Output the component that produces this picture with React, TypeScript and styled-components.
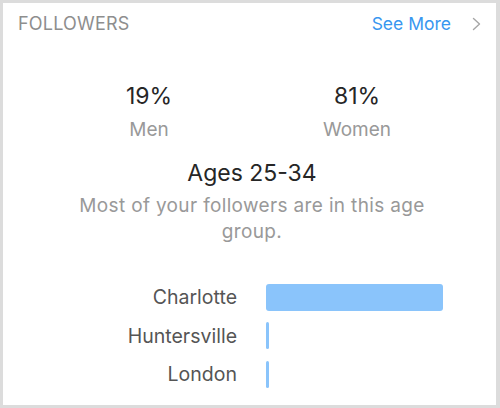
import React from "react";
import styled, { createGlobalStyle } from "styled-components";

const Global = createGlobalStyle`
  html, body { margin: 0; padding: 0; background: #dcdcdc; }
  body { font-family: Inter, "Liberation Sans", Arial, sans-serif; -webkit-font-smoothing: antialiased; }
`;

const Frame = styled.div`
  width: 500px;
  height: 408px;
  box-sizing: border-box;
  padding: 3px 4px 3px 3px;
  background: #dcdcdc;
`;

const Card = styled.div`
  height: 100%;
  background: #fff;
  display: flex;
  flex-direction: column;
`;

const Header = styled.div`
  height: 41px;
  display: flex;
  align-items: center;
  justify-content: space-between;
  padding: 0 15px;
`;

const Title = styled.div`
  font-size: 18px;
  color: #8e8e8e;
  letter-spacing: 0.2px;
`;

const SeeMore = styled.div`
  display: flex;
  align-items: center;
  gap: 21px;
  font-size: 17.5px;
  color: #3897f0;
`;

const Gender = styled.div`
  margin-top: 38px;
  display: grid;
  grid-template-columns: 208px 208px;
  justify-content: center;
  padding-left: 7px;
`;

const GenderCol = styled.div`
  display: flex;
  flex-direction: column;
  align-items: center;
`;

const Percent = styled.div`
  font-size: 23px;
  line-height: 28px;
  color: #262626;
`;

const GenderLabel = styled.div`
  margin-top: 8px;
  font-size: 19px;
  line-height: 24px;
  color: #999;
`;

const AgeTitle = styled.div`
  margin-top: 17px;
  text-align: center;
  font-size: 23px;
  line-height: 28px;
  color: #262626;
  padding-left: 5px;
`;

const AgeDesc = styled.div`
  margin: 6px auto 0;
  width: 380px;
  padding-left: 5px;
  text-align: center;
  font-size: 19px;
  line-height: 26px;
  letter-spacing: 0.35px;
  color: #999;
`;

const Cities = styled.div`
  margin-top: 33px;
  display: flex;
  flex-direction: column;
`;

const Row = styled.div`
  height: 38.5px;
  display: flex;
  align-items: center;
  gap: 29px;
`;

const City = styled.div`
  width: 234px;
  text-align: right;
  font-size: 19.5px;
  color: #555;
`;

const Track = styled.div`
  width: 177px;
  height: 27px;
`;

const Bar = styled.div`
  height: 100%;
  min-width: 3px;
  border-radius: 3px;
  background: #8ac4fb;
`;

const Chevron = () => (
  <svg width="9" height="14" viewBox="0 0 9 14" fill="none">
    <polyline points="1.5,1.5 7.5,7 1.5,12.5" stroke="#a6a6a6" strokeWidth="1.4" strokeLinecap="round" strokeLinejoin="round" />
  </svg>
);

const cities = [
  { name: "Charlotte", value: 100 },
  { name: "Huntersville", value: 1.7 },
  { name: "London", value: 1.7 },
];

export default function App() {
  return (
    <Frame>
      <Global />
      <Card>
        <Header>
          <Title>FOLLOWERS</Title>
          <SeeMore>
            See More
            <Chevron />
          </SeeMore>
        </Header>
        <Gender>
          <GenderCol>
            <Percent>19%</Percent>
            <GenderLabel>Men</GenderLabel>
          </GenderCol>
          <GenderCol>
            <Percent>81%</Percent>
            <GenderLabel>Women</GenderLabel>
          </GenderCol>
        </Gender>
        <AgeTitle>Ages 25-34</AgeTitle>
        <AgeDesc>Most of your followers are in this age group.</AgeDesc>
        <Cities>
          {cities.map((c) => (
            <Row key={c.name}>
              <City>{c.name}</City>
              <Track>
                <Bar style={{ width: `${c.value}%` }} />
              </Track>
            </Row>
          ))}
        </Cities>
      </Card>
    </Frame>
  );
}
